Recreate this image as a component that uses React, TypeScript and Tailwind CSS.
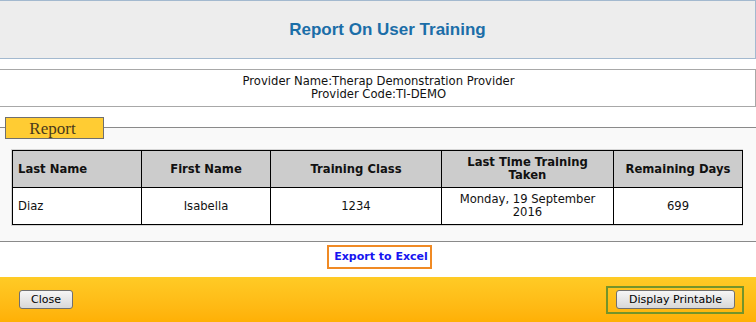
export default function App() {
  const font = { fontFamily: '"DejaVu Sans", Verdana, sans-serif' };
  return (
    <div className="w-[756px] h-[322px] bg-white overflow-hidden flex flex-col text-[11.6px] text-[#111]" style={font}>
      {/* Header */}
      <div className="h-[59px] shrink-0 border-t border-b border-r border-[#a3b9cf] bg-[#ededed] flex items-center justify-center">
        <h1 className="text-[17px] font-bold text-[#1b6ea8] pl-[20px]" style={{ fontFamily: '"Liberation Sans", Arial, sans-serif' }}>
          Report On User Training
        </h1>
      </div>
      <div className="h-[10px] shrink-0" />
      {/* Provider box */}
      <div className="h-[38px] shrink-0 border-t border-b border-r border-[#a8a8a8] flex flex-col items-center justify-center leading-[13px] pl-[2px]">
        <div>Provider Name:Therap Demonstration Provider</div>
        <div>Provider Code:TI-DEMO</div>
      </div>
      <div className="h-[20px] shrink-0" />
      {/* Report section */}
      <div className="h-[115px] shrink-0 border-t border-b border-[#8a8a8a] bg-[#f9f9f9] flex flex-col">
        <div className="-mt-[11px] ml-[5px] w-[99px] h-[22px] bg-[#ffcc33] border border-[#6f6f6f] flex items-center justify-center text-[17px] text-[#4a3a1c] leading-none pr-[4px]" style={{ fontFamily: '"Liberation Serif", "Times New Roman", serif' }}>
          Report
        </div>
        <div className="mt-[10px] ml-[11px] w-[732px] border border-[#d6d6d6]">
          <table className="w-[730px] border-collapse table-fixed">
            <colgroup>
              <col className="w-[129px]" />
              <col className="w-[129px]" />
              <col className="w-[171px]" />
              <col className="w-[172px]" />
              <col className="w-[129px]" />
            </colgroup>
            <thead>
              <tr className="h-[37px] bg-[#cccccc] font-bold leading-[13px]">
                <th className="border border-black text-left px-[5px] font-bold">Last Name</th>
                <th className="border border-black text-center px-[6px] font-bold">First Name</th>
                <th className="border border-black text-center px-[6px] font-bold">Training Class</th>
                <th className="border border-black text-center px-[14px] font-bold">Last Time Training Taken</th>
                <th className="border border-black text-center px-[2px] font-bold">Remaining Days</th>
              </tr>
            </thead>
            <tbody>
              <tr className="h-[37px] bg-white leading-[13px]">
                <td className="border border-black text-left px-[5px]">Diaz</td>
                <td className="border border-black text-center px-[6px]">Isabella</td>
                <td className="border border-black text-center px-[6px]">1234</td>
                <td className="border border-black text-center px-[14px]">Monday, 19 September 2016</td>
                <td className="border border-black text-center px-[6px]">699</td>
              </tr>
            </tbody>
          </table>
        </div>
      </div>
      {/* Export */}
      <div className="h-[35px] shrink-0 flex items-start justify-center pt-[3px]">
        <div className="ml-[2px] w-[105px] h-[24px] border-2 border-[#f08a24] flex items-center justify-center pl-[4px]">
          <span className="text-[#1515f0] font-bold text-[11px]">Export to Excel</span>
        </div>
      </div>
      {/* Footer */}
      <div className="flex-1 bg-gradient-to-b from-[#ffcb25] to-[#ffb005] flex items-center justify-between pl-[19px] pr-[12px]">
        <button className="w-[54px] h-[19px] rounded-[3px] border border-[#707070] bg-gradient-to-b from-[#f6f6f6] to-[#d8d8d8] text-[11px] text-black leading-none" style={font}>
          Close
        </button>
        <div className="w-[138px] h-[28px] border-2 border-[#74942a] flex items-center justify-end pr-[7px]">
          <button className="w-[119px] h-[19px] rounded-[3px] border border-[#707070] bg-gradient-to-b from-[#f6f6f6] to-[#d8d8d8] text-[11px] text-black leading-none" style={font}>
            Display Printable
          </button>
        </div>
      </div>
    </div>
  );
}
